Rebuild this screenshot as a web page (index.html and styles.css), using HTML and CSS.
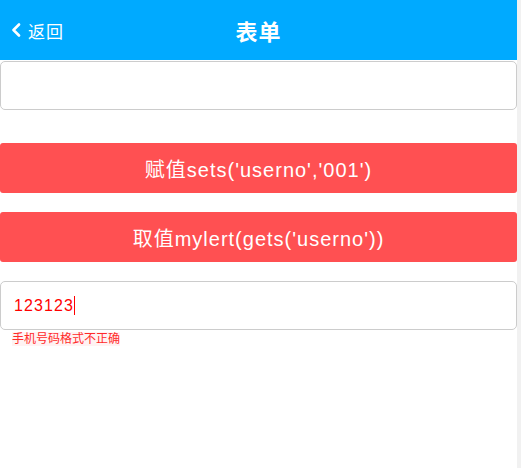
FILE: index.html
```html
<!DOCTYPE html>
<html lang="zh-CN">
<head>
    <meta charset="UTF-8">
    <meta name="viewport" content="width=device-width, initial-scale=1.0">
    <title>表单</title>
    <link rel="stylesheet" href="styles.css">
</head>
<body>
    <div class="page">
        <div class="main">
            <header class="topbar">
                <a class="back" href="#">
                    <svg class="back-icon" width="10" height="14" viewBox="0 0 10 14">
                        <path d="M8 1.5 L2.5 7 L8 12.5" fill="none" stroke="#fff" stroke-width="2.6" stroke-linecap="round" stroke-linejoin="round"/>
                    </svg>
                    <span>返回</span>
                </a>
                <h1 class="title">表单</h1>
                <span></span>
            </header>

            <div class="field"></div>

            <button class="btn btn-first">赋值sets('userno','001')</button>
            <button class="btn">取值mylert(gets('userno'))</button>

            <div class="field field-value">
                <span class="value">123123</span><span class="caret"></span>
            </div>
            <div class="error"><span>手机号码格式不正确</span></div>
        </div>
        <div class="track"></div>
    </div>
</body>
</html>
```

FILE: styles.css
```css
/* General Styles */
body {
    margin: 0;
    font-family: 'Liberation Sans', Arial, 'Noto Sans CJK SC', sans-serif;
    background: #fff;
}

.page {
    display: flex;
    min-height: 100vh;
}

.main {
    flex: 1;
    display: flex;
    flex-direction: column;
}

.track {
    width: 4px;
    background: #f1f1f1; /* scrollbar strip */
}

/* Header */
.topbar {
    height: 60px;
    background: #00aaff;
    display: grid;
    grid-template-columns: 1fr auto 1fr;
    align-items: center;
    color: #fff;
}

.back {
    display: flex;
    align-items: center;
    gap: 7px;
    padding-left: 11px;
    color: #fff;
    text-decoration: none;
    font-size: 17px;
    letter-spacing: 1px;
}

.back-icon {
    display: block;
}

.title {
    margin: 0;
    font-size: 22px;
    font-weight: bold;
    letter-spacing: 1px;
}

/* Inputs */
.field {
    height: 47px;
    margin-top: 1px;
    border: 1px solid #ccc;
    border-radius: 5px;
    background: #fff;
    display: flex;
    align-items: center;
    padding-left: 13px;
}

.field-value {
    margin-top: 19px;
}

.value {
    color: #ff0000;
    font-size: 16px;
    letter-spacing: 1.1px;
}

.caret {
    width: 1px;
    height: 19px;
    background: #ff0000;
    margin-left: 0;
}

.error {
    margin: 2px 0 0 12px;
    font-size: 12px;
    line-height: 14px;
    color: #ff2a2a;
}

.error span {
    background: #fff3f3;
}

/* Buttons */
.btn {
    height: 50px;
    margin-top: 19px;
    border: none;
    border-radius: 3px;
    background: #ff5052;
    color: #fff;
    font-family: inherit;
    font-size: 20px;
    letter-spacing: 1px;
    cursor: pointer;
}

.btn-first {
    margin-top: 33px;
}
```
